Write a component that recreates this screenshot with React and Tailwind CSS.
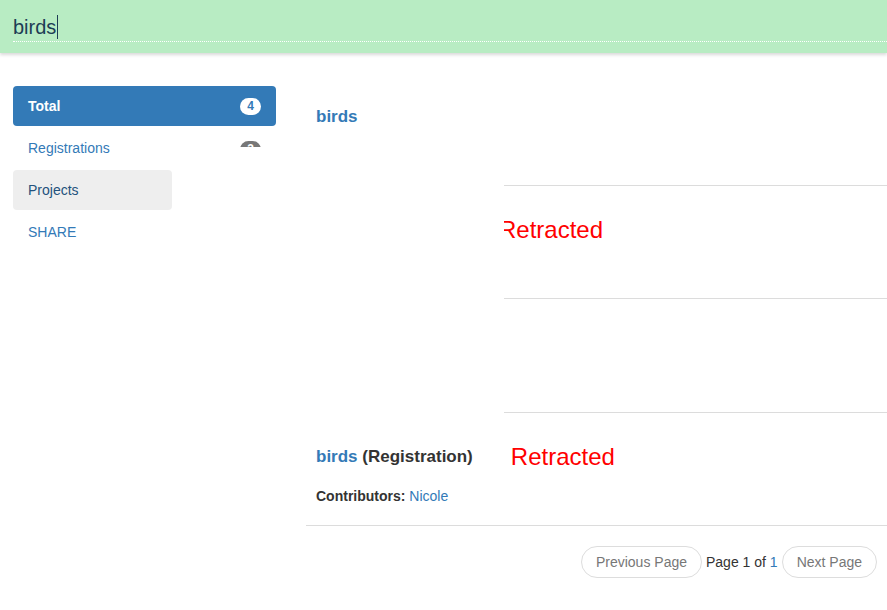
import React from "react";

const blue = "text-[#337ab7]";

const Badge = ({ children, className }) => (
  <span className={`inline-flex h-[17px] min-w-[21px] items-center justify-center rounded-full px-[6px] text-[12px] font-bold leading-none ${className}`}>
    {children}
  </span>
);

const Sidebar = () => (
  <aside className="w-[276px] shrink-0 pl-[13px] pt-[33px] text-[14px]">
    <div className="flex h-[40px] items-center justify-between rounded-[4px] bg-[#337ab7] px-[15px] font-bold text-white">
      <span>Total</span>
      <Badge className="bg-white text-[#337ab7]">4</Badge>
    </div>
    <div className={`mt-[2px] flex h-[40px] items-center justify-between px-[15px] ${blue}`}>
      <span>Registrations</span>
      <span className="h-[9px] self-end overflow-hidden" style={{ marginBottom: 21 }}>
        <Badge className="bg-[#777] text-white">3</Badge>
      </span>
    </div>
    <div className="mt-[2px] flex h-[40px] w-[159px] items-center rounded-[4px] bg-[#eeeeee] px-[15px] text-[#23527c]">
      Projects
    </div>
    <div className={`mt-[2px] flex h-[40px] items-center px-[15px] ${blue}`}>SHARE</div>
  </aside>
);

const Retracted = ({ className = "" }) => (
  <span className={`text-[24px] leading-[28px] text-[#ff0000] ${className}`}>Retracted</span>
);

const Results = () => (
  <main className="flex-1 pl-[30px] text-[#333]">
    <div className="h-[132px] pl-[10px] pt-[52px]">
      <a className={`text-[17px] font-bold leading-[20px] ${blue}`}>birds</a>
    </div>
    <div className="ml-[198px] overflow-hidden">
      <div className="h-[113px] border-t border-[#dcdcdc] pt-[30px]">
        <Retracted className="-ml-[5px]" />
      </div>
      <div className="h-[115px] border-y border-[#dcdcdc]" />
    </div>
    <div className="h-[113px] border-b border-[#dcdcdc] pl-[10px] pt-[30px]">
      <div className="flex items-center">
        <h4 className="text-[17px] font-bold leading-[22px]">
          <a className={blue}>birds</a> (Registration)
        </h4>
        <Retracted className="ml-[38px]" />
      </div>
      <p className="mt-[15px] text-[14px] leading-[20px]">
        <b>Contributors:</b> <a className={blue}>Nicole</a>
      </p>
    </div>
    <div className="mt-[20px] flex items-center justify-end gap-[3px] pr-[10px] text-[14px]">
      <button className="h-[32px] rounded-full border border-[#dddddd] px-[14px] text-[#777]">Previous Page</button>
      <span className="px-[1px]">
        Page 1 of <span className={blue}>1</span>
      </span>
      <button className="h-[32px] rounded-full border border-[#dddddd] px-[14px] text-[#777]">Next Page</button>
    </div>
  </main>
);

export default function App() {
  return (
    <div className="min-h-[610px] w-[887px] overflow-hidden bg-white" style={{ fontFamily: '"Liberation Sans", Arial, sans-serif' }}>
      <header className="relative z-10 h-[53px] bg-[#b8ecc3] pl-[13px] pt-[12px] shadow-[0_2px_3px_rgba(0,0,0,0.15)]">
        <div className="flex h-[30px] items-center border-b border-dotted border-white text-[20px] text-[#1d3d55]">
          <span>birds</span>
          <span className="ml-[1px] h-[24px] w-[1px] bg-[#1d3d55]" />
        </div>
      </header>
      <div className="flex">
        <Sidebar />
        <Results />
      </div>
    </div>
  );
}
